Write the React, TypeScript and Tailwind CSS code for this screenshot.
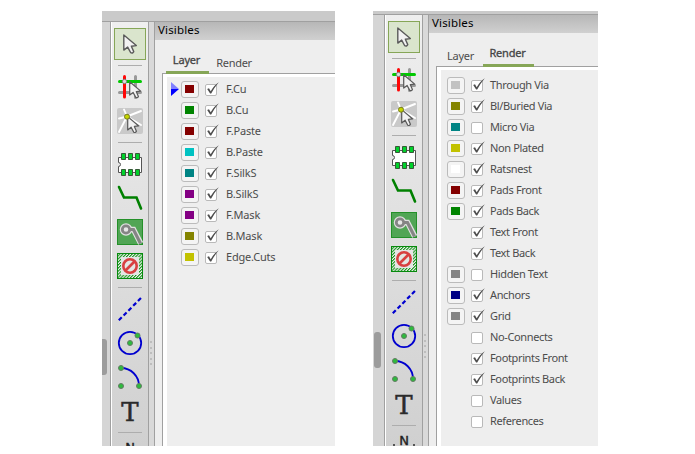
import React from "react";

type Item = { label: string; color?: string; on: boolean; current?: boolean };

const layers: Item[] = [
  { label: "F.Cu", color: "#840000", on: true, current: true },
  { label: "B.Cu", color: "#008400", on: true },
  { label: "F.Paste", color: "#840000", on: true },
  { label: "B.Paste", color: "#00c2c2", on: true },
  { label: "F.SilkS", color: "#008484", on: true },
  { label: "B.SilkS", color: "#840084", on: true },
  { label: "F.Mask", color: "#840084", on: true },
  { label: "B.Mask", color: "#848400", on: true },
  { label: "Edge.Cuts", color: "#c2c200", on: true },
];

const renders: Item[] = [
  { label: "Through Via", color: "#c2c2c2", on: true },
  { label: "Bl/Buried Via", color: "#848400", on: true },
  { label: "Micro Via", color: "#008484", on: false },
  { label: "Non Plated", color: "#c2c200", on: true },
  { label: "Ratsnest", color: "#ffffff", on: true },
  { label: "Pads Front", color: "#840000", on: true },
  { label: "Pads Back", color: "#008400", on: true },
  { label: "Text Front", on: true },
  { label: "Text Back", on: true },
  { label: "Hidden Text", color: "#848484", on: false },
  { label: "Anchors", color: "#000084", on: true },
  { label: "Grid", color: "#848484", on: true },
  { label: "No-Connects", on: false },
  { label: "Footprints Front", on: true },
  { label: "Footprints Back", on: true },
  { label: "Values", on: false },
  { label: "References", on: false },
];

const Icon = ({ className = "", children }: { className?: string; children: React.ReactNode }) => (
  <svg viewBox="0 0 26 26" className={`block h-[26px] w-[26px] shrink-0 ${className}`} fill="none">
    {children}
  </svg>
);

const Arrow = ({ x, y, scale = 1 }: { x: number; y: number; scale?: number }) => (
  <path
    transform={`translate(${x} ${y}) scale(${scale})`}
    d="M0 0 L0 14 L3.6 11.2 L6.4 16.4 Q8.2 17.4 9.2 15.4 L7 10.4 L11.6 9.8 Z"
    fill="#f2f2f2"
    stroke="#5a5a5a"
    strokeWidth="1.3"
    strokeLinejoin="round"
  />
);

const Sep = ({ className }: { className: string }) => (
  <div className={`h-px w-6 shrink-0 bg-[#adadad] ${className}`} />
);

const Dot = ({ x, y }: { x: number; y: number }) => (
  <circle cx={x} cy={y} r="2.5" fill="#2dbb3d" stroke="#647a64" strokeWidth="1" />
);

function Toolbar({ id }: { id: string }) {
  return (
    <div className="flex w-9 shrink-0 flex-col items-center overflow-hidden bg-linear-to-b from-[#efefef] to-[#d0d0d0]">
      <div className="mt-1.5 flex h-8 w-8 shrink-0 items-center justify-center border border-[#86a657] bg-[#dae5cd]">
        <Icon><Arrow x={6.8} y={4} scale={1.08} /></Icon>
      </div>
      <Sep className="mt-[5px]" />
      <Icon className="mt-2">
        <path d="M18.5 2.5V23.5 M2.5 18.5H23.5" stroke="#999" strokeWidth="3" strokeLinecap="round" />
        <path d="M7.5 2.5V23" stroke="#ff0606" strokeWidth="3" strokeLinecap="round" />
        <path d="M2.5 7.5H23.5" stroke="#00c800" strokeWidth="3" strokeLinecap="round" />
        <circle cx="7.5" cy="7.5" r="2.2" fill="#ddd" stroke="#777" />
        <Arrow x={12.7} y={7.8} scale={0.95} />
      </Icon>
      <Icon className="mt-2">
        <rect width="26" height="26" rx="2" fill="#c9c9c9" />
        <path d="M10 8.5L2 10.5 M10 8.5L2 24 M10 8.5L7 1.5 M10 8.5L24 3 M10 8.5L24 17" stroke="#fff" strokeWidth="1.9" strokeLinecap="round" />
        <Arrow x={10.7} y={8.6} scale={0.95} />
        <circle cx="10" cy="8.7" r="2.5" fill="#c6d600" stroke="#74791e" />
      </Icon>
      <Sep className="mt-2" />
      <Icon className="mt-[9px]">
        <path d="M1.5 5.5H24.5V20.5H1.5V14.5A2 2 0 0 0 1.5 10.5Z" fill="#fff" stroke="#555" />
        <path d="M4.5 1.5h4v6h-4z M11.5 1.5h4v6h-4z M18.5 1.5h4v6h-4z M4.5 17.5h4v6h-4z M11.5 17.5h4v6h-4z M18.5 17.5h4v6h-4z" fill="#00d22b" stroke="#375837" />
      </Icon>
      <Icon className="mt-[7px]">
        <path d="M2 2L7 12.5H19.5L24 23.5" stroke="#008000" strokeWidth="2.6" strokeLinecap="round" />
      </Icon>
      <Icon className="mt-2">
        <rect x=".5" y=".5" width="25" height="25" fill="#51a555" stroke="#249029" />
        <path d="M9 10.5H16.5L23.7 24.5" stroke="#e1e1e1" strokeWidth="5.6" />
        <circle cx="9" cy="10.5" r="6.2" fill="#e1e1e1" />
        <path d="M10 10.5H16.5L23.5 24.5" stroke="#858585" strokeWidth="3.2" />
        <circle cx="9" cy="10.5" r="3.7" fill="#e7e7e7" stroke="#858585" strokeWidth="2.8" />
      </Icon>
      <Icon className="mt-2">
        <defs>
          <pattern id={id} width="2.2" height="2.2" patternUnits="userSpaceOnUse" patternTransform="rotate(45)">
            <rect width="1.1" height="2.2" fill="#168f1c" />
          </pattern>
        </defs>
        <rect x=".5" y=".5" width="25" height="25" fill="#f2f7f2" />
        <rect x=".5" y=".5" width="25" height="25" fill={`url(#${id})`} stroke="#078a0d" />
        <rect x="4" y="4" width="18" height="18" fill="#e4e6e4" />
        <circle cx="13" cy="13" r="6.7" stroke="#d84040" strokeWidth="2.6" />
        <path d="M8.5 17.5L17.5 8.5" stroke="#d84040" strokeWidth="2.6" />
      </Icon>
      <Sep className="mt-2" />
      <Icon className="mt-2">
        <path d="M1.8 24.3L24.5 1.5" stroke="#0000cf" strokeWidth="2.2" strokeDasharray="4.2 2.6" />
      </Icon>
      <Icon className="mt-2">
        <circle cx="13" cy="13" r="11.2" stroke="#0000cf" strokeWidth="1.8" />
        <Dot x={13} y={13} />
        <Dot x={20.5} y={5.5} />
      </Icon>
      <Icon className="mt-2">
        <path d="M4 4C14 4 22 12 22 22" stroke="#0000cf" strokeWidth="1.8" />
        <Dot x={4} y={4} />
        <Dot x={4} y={22} />
        <Dot x={22} y={22} />
      </Icon>
      <div className="mt-2 flex h-[26px] shrink-0 items-center justify-center pt-px font-['DejaVu_Serif',serif] text-[26px] leading-[26px] text-[#2b2b2b] [-webkit-text-stroke:0.5px_#2b2b2b]">T</div>
      <Sep className="mt-2" />
      <div className="mt-2 flex h-5 w-[22px] shrink-0 justify-between font-['DejaVu_Sans',sans-serif] text-[13px] leading-[14px] text-[#222] [-webkit-text-stroke:0.4px_#222]">
        <i className="mt-[10px] block h-1 w-[2px] bg-[#555]" />
        <span>N</span>
        <i className="mt-[10px] block h-1 w-[2px] bg-[#555]" />
      </div>
    </div>
  );
}

const Check = ({ on }: { on: boolean }) => (
  <svg viewBox="0 0 16 21" className="block h-[21px] w-4 shrink-0" fill="none">
    <rect x=".5" y="5.5" width="11" height="11" rx="1.5" fill="#fff" stroke="#b9b9b9" />
    {on && <path d="M2.2 10L4 9.3L5.7 12.2Q9 6.2 13.8 3.2Q9.3 8.5 6.2 14.6H5.1Z" fill="#4d4d4d" />}
  </svg>
);

function Row({ item, tight }: { item: Item; tight: boolean }) {
  return (
    <div className="flex h-[21px] items-center">
      <div className="flex w-[14px] shrink-0 justify-end">
        {item.current && (
          <svg viewBox="0 0 10 14" className="mb-px mr-0.5 block h-[14px] w-2 shrink-0" preserveAspectRatio="none">
            <path d="M0 0L10 7H0Z" fill="#8080ff" />
            <path d="M0 7H10L0 14Z" fill="#0000ff" />
          </svg>
        )}
      </div>
      <div className="w-6 shrink-0">
        {item.color && (
          <div className="flex h-[17px] w-[18px] items-center justify-center rounded-[3px] border border-[#bbb] bg-[#f4f4f4] pb-px pr-px">
            <div className="h-2 w-[9px]" style={{ background: item.color }} />
          </div>
        )}
      </div>
      <Check on={item.on} />
      <span className={`whitespace-nowrap ${tight ? "ml-[3px] tracking-[-0.36px]" : "ml-[5px] tracking-[-0.2px]"}`}>{item.label}</span>
    </div>
  );
}

function Tab({ label, active, className }: { label: string; active: boolean; className: string }) {
  return (
    <div className={`flex h-[34px] justify-center leading-4 ${className} ${active ? "border-b-[3px] border-[#86a657] pt-[12px] tracking-[-0.2px] text-[#444] [-webkit-text-stroke:0.3px_#444]" : "pt-[15px] tracking-[-0.3px]"}`}>
      {label}
    </div>
  );
}

function Panel({ tab, items }: { tab: "Layer" | "Render"; items: Item[] }) {
  const left = tab === "Layer";
  return (
    <section className={`flex h-[435px] flex-col overflow-hidden bg-[#eee] ${left ? "w-[233px]" : "w-[225px]"}`}>
      <div className={`shrink-0 border-b border-[#a0a0a0] bg-[#cacaca] ${left ? "h-[11px]" : "h-1"}`} />
      <div className="flex min-h-0 grow">
        <div className={`shrink-0 border-r border-[#a0a0a0] bg-[#d5d5d5] pt-[317px] ${left ? "w-[9px]" : "w-3 pl-px"}`}>
          <div className={`h-9 bg-[#9c9c9c] ${left ? "w-[5px] rounded-r-[3px]" : "w-[7px] rounded-[3px]"}`} />
        </div>
        <div className="w-px shrink-0 bg-white" />
        <Toolbar id={`hatch-${tab}`} />
        <div className="flex w-[7px] shrink-0 flex-col items-start gap-[3.5px] border-x border-[#a0a0a0] bg-[#d9d9d9] pl-px pt-[319px]">
          {[0, 1, 2, 3, 4].map((n) => <i key={n} className="block h-[2px] w-[2px] shrink-0 bg-[#bdbdbd]" />)}
        </div>
        <div className="flex min-w-0 grow flex-col">
          <header className="h-[18px] shrink-0 bg-linear-to-b from-[#b7b7b7] to-[#d0d0d0] pl-[3px] text-[11.5px] leading-4 tracking-[0.15px] text-black">Visibles</header>
          <div className="z-10 -mb-px flex h-[34px] shrink-0 pl-[11px]">
            <Tab label="Layer" active={left} className={left ? "w-[43px] pr-0.5" : "w-[43px] pr-0.5"} />
            <Tab label="Render" active={!left} className={left ? "w-[50px]" : "w-[51px] pr-0.5"} />
          </div>
          <div className="ml-[7px] grow border-l border-t border-[#a0a0a0] bg-white pl-1 pt-[3px]">
            <div className={`h-full bg-[#eee] ${left ? "pt-0.5" : "pt-[5px]"}`}>
              <div className={left ? "" : "-ml-2"}>
                {items.map((item) => <Row key={item.label} item={item} tight={!left} />)}
              </div>
            </div>
          </div>
        </div>
      </div>
    </section>
  );
}

export default function App() {
  return (
    <main className="flex h-[454px] w-[695px] gap-[38px] overflow-hidden bg-white pl-[102px] pt-[11px] font-['Noto_Sans',sans-serif] text-[11px] text-[#4c4c4c]">
      <Panel tab="Layer" items={layers} />
      <Panel tab="Render" items={renders} />
    </main>
  );
}
